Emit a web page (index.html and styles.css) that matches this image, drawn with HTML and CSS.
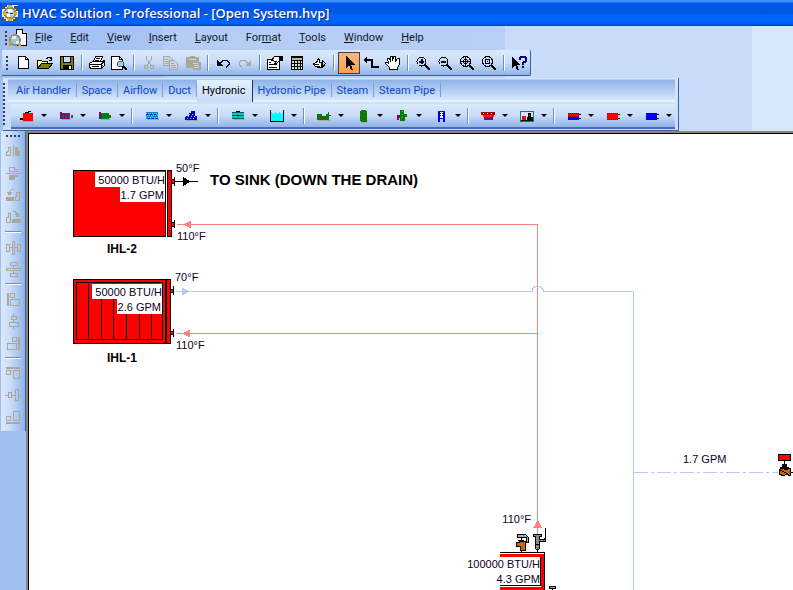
FILE: index.html
```html
<!DOCTYPE html>
<html lang="en">
<head>
<meta charset="utf-8">
<title>HVAC Solution - Professional - [Open System.hvp]</title>
<link rel="stylesheet" href="styles.css">
</head>
<body>
<header class="titlebar">
  <svg class="icon" viewBox="0 0 16 16"><path fill="#e8edc8" d="M0 0h16v16H0z"/><path fill="#2d5a73" d="M0 0h5v2H3v2H0zM12 1h4v5h-2V4h-2zM0 12h2v2h2v2H0zM13 12h3v4h-5v-2h2z"/><circle cx="8" cy="8" r="5.500" fill="#b9d3d9" stroke="#7f8c70" stroke-width="2"/><path fill="#d9a92b" d="M1 6h3v4H1zM12 7h3v3h-3zM6 0h4v3H6zM6 13h4v3H6z"/><path fill="#fff" d="M6 4h4v3H6zM5 9h3v3H5z"/><path fill="#33444d" d="M8 8h3v1H8zM4 7h2v1H4z"/></svg>
  <h1>HVAC Solution - Professional - [Open System.hvp]</h1>
</header>

<nav class="menubar" aria-label="Menu">
  <span class="grip"></span>
  <svg class="doc-icon" viewBox="0 0 20 20"><path fill="#fff" stroke="#000" d="M7.500 1.500h6l4 4v12h-10z"/><path fill="#ccc" stroke="#000" d="M13.500 1.500v4h4"/><circle cx="6" cy="12" r="5" fill="#9fc7db" stroke="#7f9299" stroke-width="2"/><path fill="#f4f0cf" d="M3 8h4v3H3zM7 13h3v3H7z"/><path fill="#c99e37" d="M0 14h3v4H0zM9 15h3v3H9zM0 8h2v3H0z"/></svg>
  <button><u>F</u>ile</button><button><u>E</u>dit</button><button><u>V</u>iew</button><button><u>I</u>nsert</button><button><u>L</u>ayout</button><button>For<u>m</u>at</button><button><u>T</u>ools</button><button><u>W</u>indow</button><button><u>H</u>elp</button>
</nav>

<div class="toolbar" role="toolbar" aria-label="Standard">
  <span class="grip"></span>
  <button aria-label="New"><svg class="icon" viewBox="0 0 16 16"><path fill="#fff" stroke="#000" d="M3.500 1.500h7l3 3v9h-10z"/><path fill="none" stroke="#000" d="M10.500 1.500v3h3"/></svg></button>
  <button aria-label="Open"><svg class="icon" viewBox="0 0 16 16"><path fill="#ffffa0" stroke="#000" d="M.5 13.500v-8h4l1 1h5v2"/><path fill="#808000" stroke="#000" d="M.5 13.500l4-5h11l-4 5z"/><path fill="none" stroke="#000" d="M9 3.500h1v-1h3v1h1v2M12 5.500h3M14.500 2v3"/></svg></button>
  <button aria-label="Save"><svg class="icon" viewBox="0 0 16 16"><path fill="#808000" stroke="#000" d="M1.500 1.500h13v13h-13z"/><path fill="#c8dbf8" stroke="#000" d="M4.500 1.500h7v6h-7z"/><path d="M4 10h9v5H4z"/><path fill="#fff" d="M10 11h2v3h-2z"/></svg></button>
  <span class="sep"></span>
  <button aria-label="Print"><svg class="icon" viewBox="0 0 16 16"><path fill="#fff" stroke="#000" d="M4.500 6.500l2-5h7l-2 5zM.5 8.500l3-2h10l2-1v5l-3 3h-10l-2-1z"/><path fill="none" stroke="#000" d="M7 3.500h4M6 5.500h4M1 9.500h11v4M12 9.500l3-3M3 11.500h7"/><path fill="#ffff00" d="M8 10h2v1H8z"/><path fill="#808080" d="M13 10h1v2h-1z"/></svg></button>
  <button aria-label="Print preview"><svg class="icon" viewBox="0 0 16 16"><path fill="#fff" stroke="#000" d="M.5 1.500h8l3 3v10H.5z"/><path fill="none" stroke="#000" d="M8.500 1.500v3h3"/><circle cx="9.500" cy="9" r="3" fill="#8fd8e8" stroke="#555"/><path stroke="#000" stroke-width="2" d="M12 11l4 4"/></svg></button>
  <span class="sep"></span>
  <button aria-label="Cut" disabled><svg class="icon" viewBox="0 0 16 16"><g fill="none" stroke="#aca899"><path d="M5.500 1v3l4 6M10.500 1v3l-4 6"/><circle cx="5" cy="12" r="2"/><circle cx="11" cy="12" r="2"/></g></svg></button>
  <button aria-label="Copy" disabled><svg class="icon" viewBox="0 0 16 16"><g fill="#c5d5ee" stroke="#aca899"><path d="M.5 1.500h6l3 3v6h-9z"/><path d="M6.500 5.500h5l3 3v6h-8z"/><path d="M2 4.500h3M2 6.500h4M2 8.500h4M8 8.500h3M8 10.500h5M8 12.500h5"/></g></svg></button>
  <button aria-label="Paste" disabled><svg class="icon" viewBox="0 0 16 16"><path fill="#aca899" d="M1 2h4V1h5v1h4v5h2v8H8v-2H1z"/><path fill="#c5d5ee" d="M4 4h7v1H4zM8 8h5v1H8zM9 10h5v1H9zM9 12h5v1H9z"/></svg></button>
  <span class="sep"></span>
  <button aria-label="Undo"><svg class="icon" viewBox="0 0 16 16"><path d="M2 5v6h6z"/><path fill="none" stroke="#00004a" d="M5 8.500l3-3h4l2 2v2l-3 3"/></svg></button>
  <button aria-label="Redo" disabled><svg class="icon" viewBox="0 0 16 16"><path fill="#aca899" d="M14 5v6H8z"/><path fill="none" stroke="#aca899" d="M11 8.500l-3-3H4l-2 2v2l3 3"/></svg></button>
  <span class="sep"></span>
  <button aria-label="Properties"><svg class="icon" viewBox="0 0 16 16"><path fill="#fff" stroke="#000" d="M.5 4.500h12v10H.5z"/><path stroke="#000" d="M2 7.500h2M2 9.500h8M2 12.500h8"/><path fill="#fff" stroke="#000" d="M4.500 5.500l3-4h5v4l-3 3H7.500l2-2z"/><path d="M12 1h4v5h-4z"/></svg></button>
  <button aria-label="Calculator"><svg class="icon" viewBox="0 0 16 16"><path d="M2 1h12v14H2z"/><path fill="#b9b9a0" d="M3 3h10v2H3z"/><path stroke="#d8d8d8" stroke-width="2" stroke-dasharray="2 1" d="M3 7h10M3 10h10M3 13h10"/></svg></button>
  <button aria-label="Check"><svg class="icon" viewBox="0 0 16 16"><path fill="#fff" stroke="#000" d="M2.500 8.500l3-1 2-4 1 1v3h2v5h-4l-3-2z"/><path fill="none" stroke="#000" d="M3 9.500h5M5 11.500h4M11.500 5.500l3 3-3 4z"/></svg></button>
  <span class="sep"></span>
  <button class="active" aria-label="Select" aria-pressed="true"><svg class="icon" viewBox="0 0 16 16"><path d="M5 1v12l3-3 2 5h2l-2-5h4z"/></svg></button>
  <button aria-label="Connector"><svg class="icon" viewBox="0 0 16 16"><path fill="none" stroke="#000" stroke-width="2" d="M2 5h7v7h7"/><path d="M0 5l4-4v8z"/></svg></button>
  <button aria-label="Pan"><svg class="icon" viewBox="0 0 16 16"><path fill="#fff" stroke="#000" d="M4.500 14.500v-2l-4-4v-1h2l1 1-1-5h2l1 3V1.500h2v4l1-4h2v5l2-3h2v6l-2 3v2z"/></svg></button>
  <span class="sep"></span>
  <button aria-label="Zoom in"><svg class="icon" viewBox="0 0 16 16"><circle cx="6.500" cy="6.500" r="4.500" fill="#c8dbf8" stroke="#000"/><path stroke="#000" stroke-width="2" d="M10 10l5 5M4 6.500h5M6.500 4v5"/></svg></button>
  <button aria-label="Zoom out"><svg class="icon" viewBox="0 0 16 16"><circle cx="6.500" cy="6.500" r="4.500" fill="#c8dbf8" stroke="#000"/><path stroke="#000" stroke-width="2" d="M10 10l5 5M4 6.500h5"/></svg></button>
  <button aria-label="Zoom fit"><svg class="icon" viewBox="0 0 16 16"><circle cx="6.500" cy="6.500" r="5" fill="#c8dbf8" stroke="#000"/><path stroke="#000" d="M2 6.500h9M6.500 2v9M4.500 5v3M8.500 5v3M5 4.500h3M5 8.500h3"/><path stroke="#000" stroke-width="2" d="M10 10l5 5"/></svg></button>
  <button aria-label="Zoom page"><svg class="icon" viewBox="0 0 16 16"><circle cx="6.500" cy="6.500" r="5" fill="#c8dbf8" stroke="#000"/><path fill="none" stroke="#000" d="M4.500 4.500h4v4h-4zM6 6.500h1"/><path stroke="#000" stroke-width="2" d="M10 10l5 5"/></svg></button>
  <span class="sep"></span>
  <button aria-label="Context help"><svg class="icon" viewBox="0 0 16 16"><path d="M1 1v12l3-3 2 5h2l-2-5h3z"/><path fill="none" stroke="#000080" stroke-width="2" d="M9 5V3l1-1h4l1 1v3l-3 2v2M12 11v2"/></svg></button>
</div>

<section class="palette">
  <span class="grip tall"></span>
  <div class="palette-body">
    <div class="tabs" role="tablist">
      <button role="tab">Air Handler</button><button role="tab">Space</button><button role="tab">Airflow</button><button role="tab">Duct</button><button role="tab" class="selected" aria-selected="true">Hydronic</button><button role="tab">Hydronic Pipe</button><button role="tab">Steam</button><button role="tab">Steam Pipe</button>
    </div>
    <div class="parts" role="toolbar" aria-label="Hydronic parts">
      <button aria-label="Boiler"><svg class="icon" viewBox="0 0 16 16"><path fill="#aca899" d="M2 13h13v1H2z"/><path fill="#f00" d="M4 5h10v8H4z"/><path d="M1 10h3v2H1zM6 4h4v1H6zM9 3h3v1H9z"/></svg></button>
      <button aria-label="Chiller"><svg class="icon" viewBox="0 0 16 16"><path fill="#aca899" d="M4 11h9v1H4z"/><path fill="#800080" d="M2 4h2v7H2zM4 5h8v6H4z"/><path stroke="#008000" stroke-width="3" stroke-dasharray="2 1" d="M4 8h11"/><path stroke="#008000" d="M5 5.500h7"/></svg></button>
      <button aria-label="Heat exchanger"><svg class="icon" viewBox="0 0 16 16"><path fill="#aca899" d="M4 11h9v1H4z"/><path fill="#800080" d="M2 4h2v7H2z"/><path fill="#008000" d="M4 5h8v6H4zM12 7h2v3h-2z"/><path stroke="#800080" stroke-dasharray="1 2" d="M4 7.500h9M5 9.500h8"/></svg></button>
      <span class="sep"></span>
      <button aria-label="Tower"><svg class="icon" viewBox="0 0 16 16"><path fill="#aca899" d="M3 11h12v1H3z"/><path fill="#008ca8" d="M2 4h12v7H2z"/><path stroke="#0ff" stroke-dasharray="1 1" d="M2 5.500h12M3 7.500h11M2 9.500h12"/><path stroke="#00f" stroke-dasharray="2 2" d="M2 6.500h12M4 10.500h10"/></svg></button>
      <button aria-label="Fluid cooler"><svg class="icon" viewBox="0 0 16 16"><path fill="#aca899" d="M3 12h12v1H3z"/><path fill="#00c" d="M2 8h12v4H2zM6 5h6v3H6zM8 3h4v4H8z"/><path stroke="#9ab7ef" stroke-dasharray="1 2" d="M2 8.500h12M6 6.500h6M4 10.500h9"/></svg></button>
      <span class="sep"></span>
      <button aria-label="Coil"><svg class="icon" viewBox="0 0 16 16"><path fill="#00c8be" d="M2 4h12v7H2z"/><path stroke="#005c60" d="M2 4.500h12M2 7.500h12M2 10.500h12"/><path d="M6 3h4v1H6zM7 7h2v1H7z"/><path fill="#aca899" d="M4 11h11v1H4z"/></svg></button>
      <button aria-label="Tank"><svg class="icon" viewBox="0 0 16 16"><path fill="#0ff" d="M2 4l2 2 2-2 2 2 2-2 2 2 2-2v9H2z"/><path fill="none" stroke="#000" d="M1.500 2v11.500h13V2"/></svg></button>
      <span class="sep"></span>
      <button aria-label="Pump"><svg class="icon" viewBox="0 0 16 16"><path fill="#aca899" d="M3 12h12v1H3z"/><path fill="#008000" d="M1 6h5v2h4V6h2V4h1v3h2v1h-2v4H1z"/><path stroke="#800080" stroke-dasharray="1 2" d="M1 8.500h12M2 10.500h8"/></svg></button>
      <button aria-label="Air separator"><svg class="icon" viewBox="0 0 16 16"><path fill="#aca899" d="M6 14h7v1H6z"/><path fill="#008000" d="M6 2h5l1 2v9l-1 1H6l-1-1V4z"/><path stroke="#b03070" stroke-dasharray="1 3" d="M6.500 3v10M9.500 4v10"/></svg></button>
      <button aria-label="Expansion tank"><svg class="icon" viewBox="0 0 16 16"><path fill="#800080" d="M3 7h3v3H5v2H3z"/><path fill="#008000" d="M6 2h4v4h3v3h-2v4H6z"/><path stroke="#c98440" stroke-dasharray="1 2" d="M8.500 3v9"/></svg></button>
      <button aria-label="Stand"><svg class="icon" viewBox="0 0 16 16"><path stroke="#00e" stroke-width="2" d="M6 3v11M11 3v11"/><path fill="#fff" d="M7 4h3v6H7z"/><path stroke="#00e" d="M5 3.500h7M5 10.500h7"/><path stroke="#00e" stroke-dasharray="1 1" d="M7 5.500h3M7 7.500h3"/></svg></button>
      <span class="sep"></span>
      <button aria-label="Fixture"><svg class="icon" viewBox="0 0 16 16"><path fill="#900" d="M1 4h14v3H1z"/><path fill="#f02020" d="M3 7h11v2H3z"/><path fill="#800080" d="M4 9h9v3H4z"/><path stroke="#fff" stroke-dasharray="1 3" d="M3 5.500h11"/></svg></button>
      <button aria-label="Equipment"><svg class="icon" viewBox="0 0 16 16"><path fill="#d6e6fb" stroke="#008080" d="M1.500 3.500h13v10h-13z"/><path fill="#f00" d="M3 8h4v4H3z"/><path d="M9 5h3v4h2v3H8V9h1z"/><path fill="#880" d="M10 7h1v1h-1z"/><path stroke="#000" d="M2 12.500h12"/></svg></button>
      <span class="sep"></span>
      <button aria-label="Heating and cooling load"><svg class="icon" viewBox="0 0 16 16"><path fill="#f00" d="M2 5h11v4H2z"/><path fill="#00f" d="M2 9h11v3H2z"/><path stroke="#600" stroke-dasharray="1 1" d="M2 5.500h11M2 8.500h11"/><path d="M13 6h2v1h-2zM13 10h2v1h-2z"/></svg></button>
      <button aria-label="Heating load"><svg class="icon" viewBox="0 0 16 16"><path fill="#f00" d="M2 5h11v7H2z"/><path stroke="#900" stroke-dasharray="1 1" d="M2 5.500h11M2 11.500h11"/><path d="M13 6h2v1h-2zM13 10h2v1h-2z"/></svg></button>
      <button aria-label="Cooling load"><svg class="icon" viewBox="0 0 16 16"><path fill="#00f" d="M2 5h11v7H2z"/><path stroke="#008" stroke-dasharray="1 1" d="M2 5.500h11M2 11.500h11"/><path d="M13 6h2v1h-2zM13 10h2v1h-2z"/></svg></button>
    </div>
  </div>
</section>

<main class="workspace">
  <aside class="sidebar" role="toolbar" aria-label="Arrange">
    <span class="grip flat"></span>
    <button disabled aria-label="Flip horizontal"><svg class="icon" viewBox="0 0 16 16"><path d="M1.500 12.500v-3l2-1v-4h2v8zM8.500 2v12"/><path class="solid" d="M10 4h3v3l2 2v4h-5z"/></svg></button>
    <button disabled aria-label="Flip vertical"><svg class="icon" viewBox="0 0 16 16"><path d="M4.500 2.500h5v2h3v2h-8zM1 8.500h15"/><path class="solid" d="M4 10h9v2h-3v3H4z"/></svg></button>
    <button disabled aria-label="Rotate left"><svg class="icon" viewBox="0 0 16 16"><path d="M4.500 6V4.500l2-2h2M2 5.500h5M10.500 13.500v-4h1v-4h3v8z"/><path class="solid" d="M3 6h3v2H3zM1 10h8v4H1z"/></svg></button>
    <button disabled aria-label="Rotate right"><svg class="icon" viewBox="0 0 16 16"><path d="M8 2.500h2l2 2V6M10 5.500h5M1.500 13.500v-5h2v-4h2v9z"/><path class="solid" d="M11 6h3v2h-3zM7 10h9v4H7z"/></svg></button>
    <span class="sep"></span>
    <button disabled aria-label="Space across"><svg class="icon" viewBox="0 0 16 16"><path d="M1.500 5.500h3v7h-3zM7.500 2.500h2v13h-2zM12.500 5.500h3v7h-3zM5 8.500h2M10 8.500h2"/></svg></button>
    <button disabled aria-label="Space down"><svg class="icon" viewBox="0 0 16 16"><path d="M5.500 1.500h7v3h-7zM1.500 7.500h14v2h-14zM5.500 12.500h7v3h-7zM8.500 5v2M8.500 10v2"/></svg></button>
    <span class="sep"></span>
    <button disabled aria-label="Align left"><svg class="icon" viewBox="0 0 16 16"><path class="solid" d="M2 2h2v13H2z"/><path d="M5.500 2.500h4v4h-4zM5.500 8.500h9v6h-9z"/></svg></button>
    <button disabled aria-label="Align center"><svg class="icon" viewBox="0 0 16 16"><path d="M6.500 3.500h5v3h-5zM4.500 9.500h9v4h-9zM8.500 1v2M8.500 7v2M8.500 14v2"/></svg></button>
    <button disabled aria-label="Align right"><svg class="icon" viewBox="0 0 16 16"><path class="solid" d="M13 2h2v13h-2z"/><path d="M7.500 2.500h4v4h-4zM2.500 8.500h9v6h-9z"/></svg></button>
    <span class="sep"></span>
    <button disabled aria-label="Align top"><svg class="icon" viewBox="0 0 16 16"><path class="solid" d="M1 2h14v2H1z"/><path d="M1.500 5.500h4v4h-4zM8.500 5.500h6v8h-6z"/></svg></button>
    <button disabled aria-label="Align middle"><svg class="icon" viewBox="0 0 16 16"><path d="M3.500 5.500h3v5h-3zM10.500 2.500h3v11h-3zM0 8.500h3M7 8.500h3M14 8.500h2"/></svg></button>
    <button disabled aria-label="Align bottom"><svg class="icon" viewBox="0 0 16 16"><path class="solid" d="M1 13h14v2H1z"/><path d="M1.500 7.500h4v4h-4zM8.500 2.500h6v9h-6z"/></svg></button>
  </aside>
  <div class="canvas">
    <svg class="drawing" width="764" height="456" viewBox="29 134 764 456">
      <path class="hot-line" d="M177 224.500H537.500V534M177 333.500H537"/>
      <path class="hot-fill" d="M183 224.500l8-4v8zM182 333.500l8-4v8zM533 528h9l-4-8z"/>
      <path class="cold-line" d="M176 291.500H532v-2l3-3h5l3 3v2h90.500V590"/>
      <path class="cold-fill" d="M190 291.500l-8-4v8z"/>
      <path class="cold-line" stroke-dasharray="14 3 3 3" d="M634 472.500H778"/>

      <g class="shape"><path d="M73.500 170.500h92v66h-92zM167.500 170.500h4v66h-4z"/><path d="M171.500 179.500h3v4h-3zM171.500 222.500h3v4h-3z"/></g>
      <path fill="#fff" d="M95 172h70v15H95zM120 187h45v15h-45z"/>
      <path stroke="#000" d="M175 181.500h23M174.500 177v9M174.500 220v8"/><path d="M183 177l8 4.500-8 4.500z"/>
      <text class="label end" x="165" y="184">50000 BTU/H</text>
      <text class="label end" x="164" y="199">1.7 GPM</text>
      <text class="label" x="176" y="172">50°F</text>
      <text class="label" x="177" y="240">110°F</text>
      <text class="name" x="107" y="253">IHL-2</text>
      <text class="heading" x="210" y="185">TO SINK (DOWN THE DRAIN)</text>

      <g class="shape"><path d="M73.500 279.500h97v64h-97z"/><path d="M76.500 282.500h86v57h-86zM88.500 283v56M101.500 283v56M113.500 283v56M126.500 283v56M139.500 283v56M151.500 283v56"/><path stroke-width="2" d="M166 280v63"/><path d="M170.500 289.500h3v3h-3zM170.500 331.500h3v3h-3z"/></g>
      <path stroke="#000" d="M173.500 286v9M173.500 329v8"/>
      <path fill="#fff" d="M92 284h70v15H92zM117 299h45v15h-45z"/>
      <text class="label end" x="162" y="296">50000 BTU/H</text>
      <text class="label end" x="161" y="311">2.6 GPM</text>
      <text class="label" x="175" y="281">70°F</text>
      <text class="label" x="176" y="349">110°F</text>
      <text class="name" x="107" y="362">IHL-1</text>

      <text class="label" x="683" y="463">1.7 GPM</text>
      <g stroke="#000"><path fill="#f00" d="M778.500 454.500h12v6h-12z"/><path d="M784.500 461v4"/><path fill="#000" d="M782.500 464.500h4v3h2v1h-8v-1h2z"/><path fill="#cc6600" d="M779.500 469.500l3-1 3 1 5-1v7l-4-1-3 1-4-1z"/><path d="M780 470l8 4M791 472.500h2"/></g>

      <text class="label end" x="531" y="523">110°F</text>
      <path fill="#fff" stroke="#000" d="M500 552.500h44.500V592"/><path fill="none" stroke="#f00" stroke-width="3" d="M500 555h42v37M500 588h42"/><path fill="none" stroke="#000" d="M540.500 557v28M500 585.500h41"/>
      <path fill="#fff" d="M466 557h74v28h-74z"/>
      <text class="label end" x="540" y="568">100000 BTU/H</text>
      <text class="label end" x="540" y="583">4.3 GPM</text>
      <g stroke="#000"><path fill="#aaaab8" d="M517.500 534.500h8l3 3v5h-2v-5h-9z"/><path fill="#cc6600" d="M519.500 541.500h6v9h-5v-4h-4v-4h3z"/><path d="M518 540.500h6M521.500 538v2M521.500 550v2"/><path fill="#888" d="M533.500 534.500h8v2h-2v3h4l2-1v3h-6v3h-4v-8h-2z"/><circle cx="537.500" cy="547" r="2.500" fill="#888"/><path fill="none" d="M545.500 528v10M537.500 549v3"/><path fill="#aaa" d="M549.500 586.500h6v2h-6zM552.500 588v3"/></g>
    </svg>
  </div>
</main>
</body>
</html>
```
FILE: styles.css
```css
* { box-sizing: border-box; }

body {
  margin: 0;
  height: 100vh;
  overflow: hidden;
  display: flex;
  flex-direction: column;
  font: 11px/14px Roboto, sans-serif;
  background: linear-gradient(90deg, #a0bff0 0, #a8c4f3 160px, #b5cdf5 165px, #b7cff5 505px, #c8dbf8 505px, #c8dbf8 752px, #d6e6fb 752px);
}

button {
  border: 0;
  padding: 0;
  background: none;
  font: inherit;
  color: #101828;
}

svg { shape-rendering: crispEdges; flex: none; }
.icon { display: block; width: 16px; height: 16px; }

.titlebar {
  flex: none;
  height: 26px;
  padding-left: 2px;
  display: flex;
  align-items: center;
  gap: 4px;
  background: linear-gradient(#3b8cf8 0 2px, #0058e8 3px, #0055e5 13px, #0064fc 15px, #0064fc 23px, #0040c8);
}
h1 {
  margin: 0;
  font: 600 13px/18px "Open Sans", sans-serif;
  color: #fff;
  text-shadow: 1px 1px #0a2a90;
  white-space: nowrap;
}

.menubar { flex: none; height: 24px; display: flex; align-items: center; }
.menubar button { padding: 0 9px; }
.doc-icon { width: 20px; height: 20px; margin: 0 -3px 0 -1px; }

.grip {
  flex: none;
  width: 2px;
  height: 14px;
  margin: 0 3px 0 5px;
  background: repeating-linear-gradient(#27415f 0 2px, transparent 2px 4px);
}
.grip.tall { height: 42px; margin: 0 3px 0 0; align-self: center; }
.grip.flat {
  width: 15px;
  height: 2px;
  margin: 4px 0 3px;
  background: repeating-linear-gradient(90deg, #27415f 0 2px, transparent 2px 4px);
}

.toolbar {
  flex: none;
  align-self: flex-start;
  height: 26px;
  margin-left: 2px;
  display: flex;
  align-items: center;
  background: linear-gradient(#dbe9fc, #c8dbf8 50%, #8fb3e8);
  border-right: 1px solid #3b619c;
  border-bottom: 1px solid #3b619c;
  border-radius: 0 2px 2px 0;
}
.toolbar .grip { margin: 0 4px; }
.toolbar button { width: 22px; height: 22px; display: grid; place-items: center; }
.toolbar .active { background: linear-gradient(#f9b878, #fca050); border: 1px solid #3b3b60; }

.sep { flex: none; width: 2px; height: 16px; margin: 0 3px; background: linear-gradient(90deg, #6a8ccb 0 1px, #fff 1px); }

.palette {
  flex: none;
  align-self: flex-start;
  margin: 2px 0 0 3px;
  height: 53px;
  display: flex;
  background: linear-gradient(#d6e6fb, #c8dbf8);
  border-right: 1px solid #3b619c;
  border-bottom: 1px solid #3b619c;
}
.palette-body { padding-right: 3px; }
.tabs {
  height: 24px;
  padding: 2px 0 0 3px;
  display: flex;
  background: linear-gradient(#d6e6fb 0 1px, #8fb3e8 2px, #d6e6fb);
  border-bottom: 2px solid #dff2fd;
}
.tabs button {
  height: 20px;
  padding: 2px 6px 0 5px;
  color: #0a46c8;
  white-space: nowrap;
  background: linear-gradient(#7b9edb, #7b9edb) right center / 1px 14px no-repeat;
}
.tabs .selected {
  height: 22px;
  padding-top: 0;
  color: #000;
  background: linear-gradient(#dff2fd, #c8dbf8);
  border-right: 1px solid #16386f;
}
.parts {
  height: 25px;
  margin: 2px 0 0 3px;
  display: flex;
  align-items: center;
  background: linear-gradient(#dbe9fc, #c8dbf8 50%, #8fb3e8);
  border-bottom: 2px solid #4b6ca8;
}
.parts button { width: 39px; height: 22px; padding-left: 8px; display: flex; align-items: center; gap: 6px; }
.parts button::after { content: ""; border: 3px solid transparent; border-top-color: #000; border-bottom: 0; }

.workspace { flex: 1; min-height: 0; display: flex; background: #9ebef0; }
.sidebar {
  flex: none;
  align-self: flex-start;
  width: 25px;
  height: 300px;
  margin: 0 0 0 1px;
  display: flex;
  flex-direction: column;
  align-items: center;
  background: linear-gradient(90deg, #dbe9fc, #c8dbf8 40%, #8fb3e8);
  border-right: 1px solid #3b619c;
}
.sidebar button { width: 22px; height: 22px; display: grid; place-items: center; flex: none; }
.sidebar path { fill: none; stroke: #aca899; }
.sidebar .solid { fill: #aca899; stroke: none; }
.sidebar .sep { width: 16px; height: 2px; margin: 3px 0; background: linear-gradient(#6a8ccb 0 1px, #fff 1px); }

.canvas {
  flex: 1;
  min-width: 0;
  margin: 2px 0 0 2px;
  overflow: hidden;
  background: #fff;
  border-top: 1px solid #000;
  border-left: 1px solid #000;
  outline: 2px solid #8b8778;
}
.drawing { display: block; }
.hot-line { fill: none; stroke: #ff8080; }
.cold-line { fill: none; stroke: #b5cbf2; }
.hot-fill { fill: #ff8080; }
.cold-fill { fill: #b5cbf2; }
.shape path { fill: #f00; stroke: #000; }
.label { font: 11px "Liberation Sans", sans-serif; fill: #10001c; }
.name { font: bold 12px "Liberation Sans", sans-serif; }
.heading { font: bold 15px "Liberation Sans", sans-serif; }
.end { text-anchor: end; }
```
